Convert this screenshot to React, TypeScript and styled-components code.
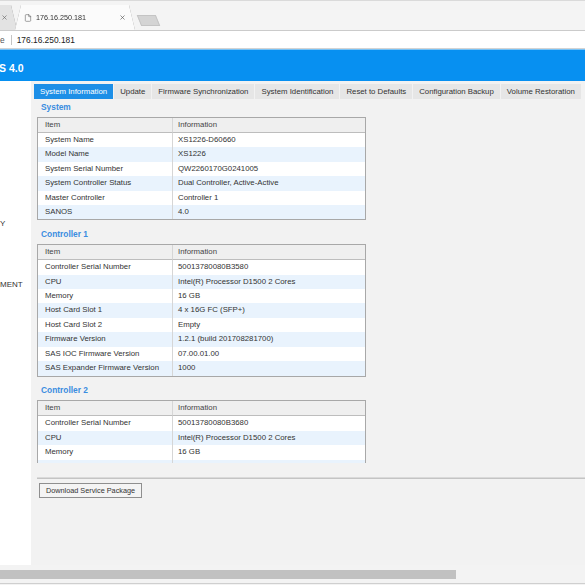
import React from 'react';
import styled, { createGlobalStyle } from 'styled-components';
import { File, X } from 'lucide-react';

const GlobalStyle = createGlobalStyle`
  *, *::before, *::after { box-sizing: border-box; }
  html, body { margin: 0; padding: 0; overflow: hidden; }
  body {
    font-family: "Liberation Sans", Arial, sans-serif;
    color: #333;
    background: #fff;
  }
`

const Page = styled.div`
  width: 585px;
  height: 585px;
  display: flex;
  flex-direction: column;
  overflow: hidden;
`

const TabStrip = styled.div`
  height: 31px;
  flex: none;
  display: flex;
  align-items: flex-end;
  padding-top: 5px;
  background: #f4f4f4;
  border-top: 1px solid #dadada;
  border-bottom: 1px solid #cbcbcb;
  overflow: hidden;
`

const BrowserTab = styled.div<{ $active?: boolean }>`
  position: relative;
  z-index: ${(p) => (p.$active ? 2 : 1)};
  flex: none;
  height: 25px;
  width: ${(p) => (p.$active ? 120 : 60)}px;
  margin-left: ${(p) => (p.$active ? -2 : -43)}px;
  display: flex;
  align-items: center;
  justify-content: ${(p) => (p.$active ? 'flex-start' : 'flex-end')};
  gap: 4px;
  padding: 0 9px;
  font-size: 7.2px;
  color: #333;
  filter: drop-shadow(0 0 0.5px #8a8a8a);

  &::before {
    content: '';
    position: absolute;
    inset: 0;
    z-index: -1;
    background: ${(p) => (p.$active ? '#fbfbfb' : '#e3e3e3')};
    clip-path: polygon(6px 0, calc(100% - 6px) 0, 100% 100%, 0 100%);
  }
`

const TabTitle = styled.span`
  flex: 1;
  white-space: nowrap;
`

const NewTabButton = styled.div`
  flex: none;
  width: 19px;
  height: 11px;
  margin: 0 0 4px 4px;
  background: #d4d4d4;
  border: 1px solid #c4c4c4;
  transform: skewX(22deg);
`

const AddressBar = styled.div`
  height: 18px;
  flex: none;
  display: flex;
  align-items: center;
  background: #fff;
  border-bottom: 1px solid #d3d3d3;
  font-size: 8.4px;
  color: #222;
`

const SecurityLabel = styled.span`
  color: #555;
`

const AddressDivider = styled.span`
  width: 1px;
  height: 10px;
  margin: 0 5px 0 6px;
  background: #c4c4c4;
`

const Banner = styled.div`
  height: 32px;
  flex: none;
  display: flex;
  align-items: center;
  padding-top: 4px;
  background: #0790f1;
  border-top: 1px solid #78c2f6;
  color: #fff;
  font-size: 10.5px;
  font-weight: bold;
  text-indent: -1px;
`

const Body = styled.div`
  flex: 1;
  display: flex;
  min-height: 0;
`

const Sidebar = styled.nav`
  width: 31px;
  flex: none;
  background: #fff;
  overflow: hidden;
  display: flex;
  flex-direction: column;
  gap: 51px;
  padding-top: 138px;
`

const NavItem = styled.div`
  font-size: 8px;
  line-height: 10px;
  color: #333;
  white-space: nowrap;
`

const Main = styled.main`
  flex: 1;
  min-width: 0;
  display: flex;
  flex-direction: column;
  padding: 3px 0 0 3px;
  background: #f2f2f2;
`

const TabRow = styled.div`
  height: 15px;
  flex: none;
  display: flex;
  gap: 1px;
  overflow: hidden;
  white-space: nowrap;
`

const PageTab = styled.div<{ $active?: boolean }>`
  flex: none;
  padding: 0 6px;
  line-height: 15px;
  font-size: 7.8px;
  background: ${(p) => (p.$active ? '#1d8fe7' : '#e6e6e6')};
  color: ${(p) => (p.$active ? '#fff' : '#333')};
`

const ScrollArea = styled.div`
  height: 364px;
  flex: none;
  overflow: hidden;
  padding: 2.5px 0 0 3px;
`

const SectionTitle = styled.div`
  margin: 8.5px 0 5px;
  padding-left: 4px;
  font-size: 8.4px;
  line-height: 10px;
  font-weight: bold;
  color: #3a8de0;

  &:first-child {
    margin-top: 0;
  }
`

const InfoTable = styled.table`
  width: 329px;
  table-layout: fixed;
  border: 1px solid #a8a8a8;
  border-collapse: separate;
  border-spacing: 0;
  background: #fff;
  font-size: 7.8px;

  th, td {
    height: 14.4px;
    padding: 0 5px 0 7px;
    line-height: 14.4px;
    text-align: left;
    font-weight: normal;
    white-space: nowrap;
    overflow: hidden;
  }

  th + th, td + td {
    border-left: 1px solid #d6d6d6;
    padding-left: 5px;
  }

  th {
    height: 15.3px;
    background: #efefef;
    color: #444;
    border-bottom: 1px solid #bdbdbd;
  }

  th:first-child {
    width: 134px;
  }

  tbody tr:nth-child(even) td {
    background: #e9f3fd;
  }
`

const Separator = styled.hr`
  margin: 13.5px 0 0 3px;
  height: 0;
  border: 0;
  border-top: 1px solid #dadada;
  border-bottom: 1px solid #c4c4c4;
`

const ActionButton = styled.button`
  align-self: flex-start;
  width: 103px;
  height: 15px;
  margin: 4px 0 0 5px;
  padding: 0;
  border: 1px solid #8f8f8f;
  background: #f4f4f4;
  font-family: inherit;
  font-size: 7.3px;
  color: #333;
`

const HScroll = styled.div`
  height: 20px;
  flex: none;
  padding-top: 5px;
  background: #f3f3f3;
`

const Thumb = styled.div`
  width: 456px;
  height: 9px;
  background: #c1c1c1;
`

const WindowEdge = styled.div`
  margin-top: 4px;
  border-top: 1px solid #cfcfcf;
`

type Row = [string, string]

const SECTIONS: { title: string; rows: Row[] }[] = [
  {
    title: 'System',
    rows: [
      ['System Name', 'XS1226-D60660'],
      ['Model Name', 'XS1226'],
      ['System Serial Number', 'QW2260170G0241005'],
      ['System Controller Status', 'Dual Controller, Active-Active'],
      ['Master Controller', 'Controller 1'],
      ['SANOS', '4.0'],
    ],
  },
  {
    title: 'Controller 1',
    rows: [
      ['Controller Serial Number', '50013780080B3580'],
      ['CPU', 'Intel(R) Processor D1500 2 Cores'],
      ['Memory', '16 GB'],
      ['Host Card Slot 1', '4 x 16G FC (SFP+)'],
      ['Host Card Slot 2', 'Empty'],
      ['Firmware Version', '1.2.1 (build 201708281700)'],
      ['SAS IOC Firmware Version', '07.00.01.00'],
      ['SAS Expander Firmware Version', '1000'],
    ],
  },
  {
    title: 'Controller 2',
    rows: [
      ['Controller Serial Number', '50013780080B3680'],
      ['CPU', 'Intel(R) Processor D1500 2 Cores'],
      ['Memory', '16 GB'],
      ['Host Card Slot 1', '4 x 16G FC (SFP+)'],
    ],
  },
]

const TABS = [
  'System Information',
  'Update',
  'Firmware Synchronization',
  'System Identification',
  'Reset to Defaults',
  'Configuration Backup',
  'Volume Restoration',
]

export default function App() {
  return <Page>
    <GlobalStyle />
    <TabStrip>
      <BrowserTab>
        <X size={7} strokeWidth={2.2} color="#666" />
      </BrowserTab>
      <BrowserTab $active>
        <File size={8} strokeWidth={1.6} color="#555" />
        <TabTitle>176.16.250.181</TabTitle>
        <X size={7} strokeWidth={2.2} color="#555" />
      </BrowserTab>
      <NewTabButton />
    </TabStrip>
    <AddressBar>
      <SecurityLabel>e</SecurityLabel>
      <AddressDivider />
      <span>176.16.250.181</span>
    </AddressBar>
    <Banner>S 4.0</Banner>
    <Body>
      <Sidebar>
        <NavItem>Y</NavItem>
        <NavItem>MENT</NavItem>
      </Sidebar>
      <Main>
        <TabRow>
          {TABS.map((tab, i) => <PageTab key={tab} $active={i === 0}>{tab}</PageTab>)}
        </TabRow>
        <ScrollArea>
          {SECTIONS.map(section => <React.Fragment key={section.title}>
            <SectionTitle>{section.title}</SectionTitle>
            <InfoTable>
              <thead>
                <tr><th>Item</th><th>Information</th></tr>
              </thead>
              <tbody>
                {section.rows.map(([item, info]) => <tr key={item}><td>{item}</td><td>{info}</td></tr>)}
              </tbody>
            </InfoTable>
          </React.Fragment>)}
        </ScrollArea>
        <Separator />
        <ActionButton>Download Service Package</ActionButton>
      </Main>
    </Body>
    <HScroll>
      <Thumb />
      <WindowEdge />
    </HScroll>
  </Page>
}
